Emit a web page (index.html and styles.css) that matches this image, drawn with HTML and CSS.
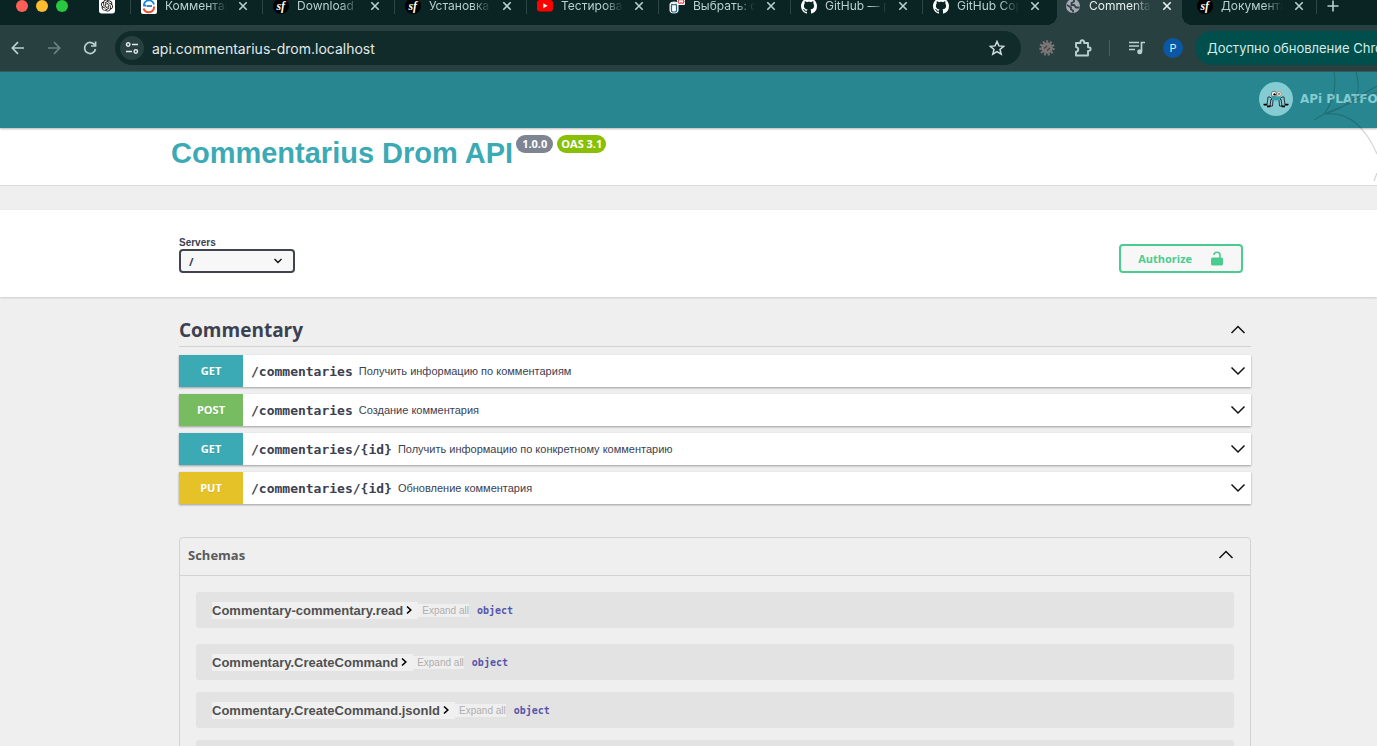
FILE: index.html
```html
<!DOCTYPE html>
<html lang="ru">
<head>
<meta charset="utf-8">
<title>Commentarius Drom API</title>
<link rel="stylesheet" href="styles.css">
</head>
<body>
<svg class="defs" aria-hidden="true">
  <symbol id="close" viewBox="0 0 10 10"><path d="M1.3 1.3l7.4 7.4M8.7 1.3L1.3 8.7" stroke="currentColor" stroke-width="1.6" fill="none"/></symbol>
  <symbol id="symfony" viewBox="0 0 16 16"><circle cx="8" cy="8" r="8" fill="#000"/><text x="3.4" y="11.6" font-family="Liberation Serif, serif" font-style="italic" font-weight="bold" font-size="12" fill="#fff">sf</text></symbol>
  <symbol id="github" viewBox="0 0 16 16"><path fill="#fff" d="M8 0C3.58 0 0 3.58 0 8c0 3.54 2.29 6.53 5.47 7.59.4.07.55-.17.55-.38 0-.19-.01-.82-.01-1.49-2.01.37-2.53-.49-2.69-.94-.09-.23-.48-.94-.82-1.13-.28-.15-.68-.52-.01-.53.63-.01 1.08.58 1.23.82.72 1.21 1.87.87 2.33.66.07-.52.28-.87.51-1.07-1.78-.2-3.64-.89-3.64-3.95 0-.87.31-1.59.82-2.15-.08-.2-.36-1.02.08-2.12 0 0 .67-.21 2.2.82.64-.18 1.32-.27 2-.27s1.36.09 2 .27c1.53-1.04 2.2-.82 2.2-.82.44 1.1.16 1.92.08 2.12.51.56.82 1.27.82 2.15 0 3.07-1.87 3.75-3.65 3.95.29.25.54.73.54 1.48 0 1.07-.01 1.93-.01 2.2 0 .21.15.46.55.38A8.01 8.01 0 0016 8c0-4.42-3.58-8-8-8z"/></symbol>
  <symbol id="down" viewBox="0 0 16 10"><path d="M1.500 1.500L8 8l6.500-6.500" stroke="#111" stroke-width="1.500" fill="none"/></symbol>
  <symbol id="up" viewBox="0 0 16 10"><path d="M1.500 8L8 1.500 14.500 8" stroke="#111" stroke-width="1.500" fill="none"/></symbol>
  <symbol id="right" viewBox="0 0 8 10"><path d="M2 1.500L5.800 5 2 8.500" stroke="#000" stroke-width="1.600" fill="none"/></symbol>
</svg>

<div class="browser">
  <nav class="tabs">
    <div class="lights"><i class="red"></i><i class="yellow"></i><i class="green"></i></div>
    <svg class="pinned" viewBox="0 0 24 24"><rect width="24" height="24" rx="4" fill="#fff"/><path transform="translate(3 3) scale(.75)" d="M22.2819 9.8211a5.9847 5.9847 0 0 0-.5157-4.9108 6.0462 6.0462 0 0 0-6.5098-2.9A6.0651 6.0651 0 0 0 4.9807 4.1818a5.9847 5.9847 0 0 0-3.9977 2.9 6.0462 6.0462 0 0 0 .7427 7.0966 5.98 5.98 0 0 0 .511 4.9107 6.051 6.051 0 0 0 6.5146 2.9001A5.9847 5.9847 0 0 0 13.2599 24a6.0557 6.0557 0 0 0 5.7718-4.2058 5.9894 5.9894 0 0 0 3.9977-2.9001 6.0557 6.0557 0 0 0-.7475-7.073zm-9.022 12.6081a4.4755 4.4755 0 0 1-2.8764-1.0408l.1419-.0804 4.7783-2.7582a.7948.7948 0 0 0 .3927-.6813v-6.7369l2.02 1.1686a.071.071 0 0 1 .038.052v5.5826a4.504 4.504 0 0 1-4.4945 4.4944zm-9.6607-4.1254a4.4708 4.4708 0 0 1-.5346-3.0137l.142.0852 4.783 2.7582a.7712.7712 0 0 0 .7806 0l5.8428-3.3685v2.3324a.0804.0804 0 0 1-.0332.0615L9.74 19.9502a4.4992 4.4992 0 0 1-6.1408-1.6464zM2.3408 7.8956a4.485 4.485 0 0 1 2.3655-1.9728V11.6a.7664.7664 0 0 0 .3879.6765l5.8144 3.3543-2.0201 1.1685a.0757.0757 0 0 1-.071 0l-4.8303-2.7865A4.504 4.504 0 0 1 2.3408 7.872zm16.5963 3.8558L13.1038 8.364 15.1192 7.2a.0757.0757 0 0 1 .071 0l4.8303 2.7913a4.4944 4.4944 0 0 1-.6765 8.1042v-5.6772a.79.79 0 0 0-.407-.667zm2.0107-3.0231l-.142-.0852-4.7735-2.7818a.7759.7759 0 0 0-.7854 0L9.409 9.2297V6.8974a.0662.0662 0 0 1 .0284-.0615l4.8303-2.7866a4.4992 4.4992 0 0 1 6.6802 4.66zM8.3065 12.863l-2.02-1.1638a.0804.0804 0 0 1-.038-.0567V6.0742a4.4992 4.4992 0 0 1 7.3757-3.4537l-.142.0805L8.704 5.459a.7948.7948 0 0 0-.3927.6813zm1.0976-2.3654l2.602-1.4998 2.6069 1.4998v2.9994l-2.5974 1.4997-2.6067-1.4997Z"/></svg>
    <div class="tab"><svg class="fav" viewBox="0 0 16 16"><rect width="16" height="16" rx="2" fill="#fff"/><path d="M13 6.500A5.200 5.200 0 0 0 3 6v1.500h2" fill="none" stroke="#1687e0" stroke-width="1.800"/><path d="M2.600 10.500A5.400 5.400 0 0 0 13 10V8.500" fill="none" stroke="#f04a32" stroke-width="2"/><path d="M5.500 8h5.500" stroke="#1665b8" stroke-width="1.600"/></svg><span>Комментарии</span><button aria-label="Закрыть"><svg><use href="#close"/></svg></button></div>
    <div class="tab"><svg class="fav"><use href="#symfony"/></svg><span>Download Symfony</span><button aria-label="Закрыть"><svg><use href="#close"/></svg></button></div>
    <div class="tab"><svg class="fav"><use href="#symfony"/></svg><span>Установка и</span><button aria-label="Закрыть"><svg><use href="#close"/></svg></button></div>
    <div class="tab"><svg class="fav" viewBox="0 0 16 16"><rect y="2" width="16" height="11.500" rx="3" fill="#f00"/><path d="M6.300 5.200v5l4.300-2.500z" fill="#fff"/></svg><span>Тестирование</span><button aria-label="Закрыть"><svg><use href="#close"/></svg></button></div>
    <div class="tab"><svg class="fav" viewBox="0 0 16 16"><path d="M1 6q0-2 4-2t4 2v7q0 2-4 2t-4-2z" fill="#fff" stroke="#e7f2f7"/><path d="M2.500 6.500v6q0 1.500 2.500 1.500t2.500-1.500v-6M2.500 6q2.500 1.500 5 0" fill="none" stroke="#286283" stroke-width="1.200"/><rect x="8" width="8" height="7" rx="1" fill="#fff"/><path d="M10.500 1L9 3.500 10.500 6M13.500 1L15 3.500 13.500 6M12 1v1.500M12 4v2" fill="none" stroke="#e33545" stroke-width="1.200"/></svg><span>Выбрать: comm</span><button aria-label="Закрыть"><svg><use href="#close"/></svg></button></div>
    <div class="tab"><svg class="fav"><use href="#github"/></svg><span>GitHub — program</span><button aria-label="Закрыть"><svg><use href="#close"/></svg></button></div>
    <div class="tab"><svg class="fav"><use href="#github"/></svg><span>GitHub Copilot</span><button aria-label="Закрыть"><svg><use href="#close"/></svg></button></div>
    <div class="tab active"><svg class="fav" viewBox="0 0 16 16"><circle cx="8" cy="8" r="7" fill="#a7a9b5"/><path d="M2 7l4 2.500v2l2 1v2M9 1.500v2L6.500 5v2H9l2 2.500h3.500" fill="none" stroke="#304544" stroke-width="1.800"/></svg><span>Commentarius</span><button aria-label="Закрыть"><svg><use href="#close"/></svg></button></div>
    <div class="tab last"><svg class="fav"><use href="#symfony"/></svg><span>Документация</span><button aria-label="Закрыть"><svg><use href="#close"/></svg></button></div>
    <button class="newtab" aria-label="Новая вкладка"><svg viewBox="0 0 12 12"><path d="M6 .5v11M.5 6h11" stroke="currentColor" stroke-width="1.600"/></svg></button>
  </nav>
  <div class="toolbar">
    <button class="tool" aria-label="Назад"><svg viewBox="0 0 16 16"><path d="M14 8H2.500M8 2.200L2.300 8 8 13.800" stroke="currentColor" stroke-width="1.700" fill="none"/></svg></button>
    <button class="tool dim" aria-label="Вперёд"><svg viewBox="0 0 16 16"><path d="M2 8h11.500M8 2.200L13.700 8 8 13.800" stroke="currentColor" stroke-width="1.700" fill="none"/></svg></button>
    <button class="tool" aria-label="Обновить"><svg viewBox="0 0 16 16"><path d="M13 5.500A5.500 5.500 0 1 0 13.500 9M13.600 1.500V6H9" stroke="currentColor" stroke-width="1.700" fill="none"/></svg></button>
    <div class="address">
      <button class="site" aria-label="Сведения о сайте"><svg viewBox="0 0 14 14"><g fill="none" stroke="currentColor" stroke-width="1.500"><circle cx="3.200" cy="3.500" r="1.700"/><path d="M7 3.500h6M1 10.500h6"/><circle cx="10.800" cy="10.500" r="1.700"/></g></svg></button>
      <input type="text" aria-label="Адрес" value="api.commentarius-drom.localhost">
      <button class="star" aria-label="Закладка"><svg viewBox="0 0 16 16"><path d="M8 1.500l1.900 4.400 4.800.4L11 9.500l1.200 4.700L8 11.700l-4.200 2.500L5 9.500 1.300 6.300l4.800-.4z" fill="none" stroke="currentColor" stroke-width="1.500"/></svg></button>
    </div>
    <button class="tool" aria-label="Отладка"><svg viewBox="0 0 16 16"><circle cx="8" cy="8" r="5.800" fill="#7d7475"/><circle cx="8" cy="8" r="6.600" fill="none" stroke="#7d7475" stroke-width="2.200" stroke-dasharray="2 1.770"/><path d="M5 8.500l3-2.500M8 10.500l3-2.500" stroke="#354746" stroke-width="1.200"/></svg></button>
    <button class="tool" aria-label="Расширения"><svg class="puzzle" viewBox="0 0 18 18"><path d="M2 4h4.500V3a1.800 1.800 0 0 1 3.600 0v1H14v4.300h.800a1.800 1.800 0 0 1 0 3.600H14V16.500H2v-3.800c3-.3 3-4.300 0-4.600z" fill="none" stroke="currentColor" stroke-width="1.900" stroke-linejoin="round"/></svg></button>
    <i class="divider"></i>
    <button class="tool" aria-label="Медиа"><svg viewBox="0 0 16 16"><path d="M0 2.500h10M0 6h10M0 9.500h6M12.500 11.500v-9H16" stroke="currentColor" stroke-width="1.700" fill="none"/><circle cx="10.700" cy="11.700" r="2.500" fill="currentColor"/></svg></button>
    <button class="profile" aria-label="Профиль">P</button>
    <button class="update">Доступно обновление Chrome</button>
  </div>
</div>

<header class="brand">
  <svg class="web" viewBox="0 0 75 115" fill="none" stroke="#000" stroke-opacity=".17" stroke-width="1.200"><path d="M32 0q4 24-10 42M54 0q6 22-4 28Q38 38 22 42L12 48M22 42Q56 38 75 82M75 101l-3 8M50 28l25-14M22 42l53-22"/></svg>
  <a href="#" class="logo">
    <svg viewBox="0 0 34 34"><circle cx="17" cy="17" r="17" fill="#84cbd2"/><path d="M13 17l-2-2-2 0-1 8H5M13 18l-1-1-1 7H8M14 18l-.500 6H11M21 17l2-2h2l1 8h3M21 18l1-1 1 7h3M20 18l.5 6H23" fill="none" stroke="#20262b" stroke-width=".9"/><path d="M12 14.500h10q0 4-5 4t-5-4" fill="#30a2ae"/><circle cx="15" cy="12" r="2.700" fill="#fff" stroke="#333" stroke-width=".6"/><circle cx="20" cy="12" r="2.200" fill="#fff" stroke="#a46a45" stroke-width=".6"/><circle cx="15.500" cy="12.400" r="1.200"/><circle cx="20" cy="12" r=".8"/><path d="M4.500 22.500h3.500M8 24.500h3.500M22.500 24.500H26M26 22.500h3.500" stroke="#000" stroke-width="1.400"/></svg>
    <span>APi PLATFORM</span>
  </a>
</header>

<main>
  <section class="info">
    <h1>Commentarius Drom API</h1>
    <span class="badge">1.0.0</span>
    <span class="badge oas">OAS 3.1</span>
  </section>
  <section class="servers">
    <div class="wrap">
      <div class="field">
        <label for="server">Servers</label>
        <select id="server"><option>/</option></select>
      </div>
      <button class="authorize">Authorize <svg viewBox="0 0 14 16"><rect x="1" y="6.500" width="12" height="8" rx="1.500" fill="currentColor"/><path d="M4 4Q4 1.200 7 1.200t3 2.800V7.500" fill="none" stroke="currentColor" stroke-width="1.600"/></svg></button>
    </div>
  </section>

  <section class="ops">
    <h2>Commentary <button aria-label="Свернуть"><svg><use href="#up"/></svg></button></h2>
    <article class="op"><b class="method get">GET</b><a href="#">/commentaries</a><p>Получить информацию по комментариям</p><button aria-label="Развернуть"><svg><use href="#down"/></svg></button></article>
    <article class="op"><b class="method post">POST</b><a href="#">/commentaries</a><p>Создание комментария</p><button aria-label="Развернуть"><svg><use href="#down"/></svg></button></article>
    <article class="op"><b class="method get">GET</b><a href="#">/commentaries/{id}</a><p>Получить информацию по конкретному комментарию</p><button aria-label="Развернуть"><svg><use href="#down"/></svg></button></article>
    <article class="op"><b class="method put">PUT</b><a href="#">/commentaries/{id}</a><p>Обновление комментария</p><button aria-label="Развернуть"><svg><use href="#down"/></svg></button></article>
  </section>

  <section class="schemas">
    <h3>Schemas <button aria-label="Свернуть"><svg><use href="#up"/></svg></button></h3>
    <div class="list">
      <article class="schema first"><button class="name">Commentary-commentary.read<svg><use href="#right"/></svg></button><button class="expand">Expand all</button><code>object</code></article>
      <article class="schema"><button class="name">Commentary.CreateCommand<svg><use href="#right"/></svg></button><button class="expand">Expand all</button><code>object</code></article>
      <article class="schema"><button class="name">Commentary.CreateCommand.jsonld<svg><use href="#right"/></svg></button><button class="expand">Expand all</button><code>object</code></article>
      <article class="schema"></article>
    </div>
  </section>
</main>
</body>
</html>
```
FILE: styles.css
```css
* { box-sizing: border-box; }
html { height: 100%; overflow: hidden; }
body {
  margin: 0;
  height: 100%;
  overflow: hidden;
  background: #efefef;
  color: #3b4151;
  font-family: "Liberation Sans", sans-serif;
}
button {
  border: 0;
  padding: 0;
  margin: 0;
  background: none;
  color: inherit;
  font: inherit;
}
button svg { display: block; }
.defs { position: absolute; width: 0; height: 0; }

/* Browser window */
.browser { color: #b9d0cd; font-family: Inter, sans-serif; }
.tabs {
  display: flex;
  align-items: flex-end;
  height: 25px;
  background: #092423;
  overflow: hidden;
}
.lights, .tab, .newtab { display: flex; align-items: center; height: 39px; flex: none; }
.lights { gap: 8px; padding-left: 16px; }
.lights i { width: 12px; height: 12px; border-radius: 50%; }
.red { background: #ff5f57; }
.yellow { background: #febc2e; }
.green { background: #28c840; }
.pinned { width: 16px; height: 39px; flex: none; margin: 0 18px 0 31px; }
.tab {
  position: relative;
  width: 125px;
  margin-right: 7px;
  padding: 0 10px 0 8px;
  font-size: 12px;
}
.tab::before, .last::after {
  content: "";
  position: absolute;
  left: -3px;
  width: 1px;
  height: 16px;
  background: #2f4645;
}
.last::after { left: 127px; }
.fav { width: 16px; height: 16px; flex: none; }
.tab span {
  flex: 1;
  min-width: 0;
  margin: 0 11px 0 8px;
  overflow: hidden;
  white-space: nowrap;
  mask-image: linear-gradient(90deg, #000 70%, transparent);
}
.tab button svg { width: 10px; height: 10px; }
.active { background: #284040; color: #e6f1ef; }
.active::before, .active::after {
  content: "";
  position: absolute;
  bottom: 0;
  width: 10px;
  height: 10px;
}
.active::before { left: -10px; background: radial-gradient(circle at 0 0, #092423 10px, #284040 10px); }
.active::after { right: -10px; background: radial-gradient(circle at 100% 0, #092423 10px, #284040 10px); }
.last::before { display: none; }
.newtab { margin-left: 6px; }
.newtab svg { width: 12px; height: 12px; }

.toolbar {
  display: flex;
  align-items: center;
  height: 47px;
  background: #284040;
  border-bottom: 1px solid #3a5a5c;
}
.tool { display: flex; justify-content: center; width: 36px; flex: none; }
.tool svg { width: 16px; height: 16px; }
.tool .puzzle { width: 18px; height: 18px; }
.dim { color: #6b817f; }
.address {
  display: flex;
  align-items: center;
  flex: 1;
  min-width: 0;
  height: 34px;
  margin: 0 8px 0 7px;
  padding: 0 16px 0 5px;
  border-radius: 17px;
  background: #112b2b;
}
.site {
  display: grid;
  place-items: center;
  width: 24px;
  height: 24px;
  border-radius: 50%;
  background: #284040;
  color: #dfe9e8;
}
.site svg { width: 14px; height: 14px; }
.address input {
  flex: 1;
  min-width: 0;
  margin: 0 8px;
  padding: 0;
  border: 0;
  outline: 0;
  background: none;
  color: #e2eae9;
  font: 14px Inter, sans-serif;
}
.star { color: #cfdedc; }
.star svg { width: 16px; height: 16px; }
.divider { width: 1px; height: 16px; margin: 0 9px 0 8px; background: #48605f; }
.profile {
  flex: none;
  width: 20px;
  height: 20px;
  margin: 0 12px 0 8px;
  border-radius: 50%;
  background: #0b57a4;
  color: #dceaf8;
  font-size: 11px;
}
.update {
  flex: none;
  width: 182px;
  height: 34px;
  padding-left: 12px;
  border-radius: 17px 0 0 17px;
  background: #004f4d;
  color: #d3ecea;
  font-size: 13px;
  text-align: left;
  white-space: nowrap;
  overflow: hidden;
}

/* Brand bar */
.brand {
  position: relative;
  display: flex;
  justify-content: flex-end;
  align-items: center;
  height: 56px;
  padding-bottom: 2px;
  background: #288690;
  box-shadow: 0 1px 2px rgba(0, 0, 0, .3);
}
.web { position: absolute; top: 0; right: 0; width: 75px; height: 115px; }
.logo {
  display: flex;
  align-items: center;
  gap: 7px;
  width: 118px;
  overflow: hidden;
  color: #84cbd2;
  font: bold 12px "DejaVu Sans", sans-serif;
  white-space: nowrap;
  text-decoration: none;
}
.logo svg { width: 34px; height: 34px; flex: none; }

/* Title */
.info {
  display: flex;
  align-items: flex-start;
  height: 58px;
  padding: 7px 0 0 171px;
  background: #fff;
  border-bottom: 1px solid #dcdcdc;
}
h1 {
  margin: 0 3px 0 0;
  color: #3caab5;
  font-size: 29px;
  line-height: 36px;
}
.badge {
  margin-right: 4px;
  padding: 0 6px;
  border-radius: 10px;
  background: #7d8492;
  color: #fff;
  font: bold 11px/18px "Open Sans", sans-serif;
}
.oas { padding: 0 4px; background: #89bf04; }

.servers {
  margin-top: 24px;
  padding: 26px 0 24px;
  background: #fff;
  box-shadow: 0 1px 2px rgba(0, 0, 0, .15);
}
.wrap, .ops, .schemas { margin: 0 126px 0 179px; }
.wrap { display: flex; justify-content: space-between; align-items: flex-end; padding-right: 8px; }
.field { display: flex; flex-direction: column; }
.field label { font-size: 10px; font-weight: bold; line-height: 13px; }
select {
  appearance: none;
  width: 116px;
  height: 24px;
  padding: 0 8px;
  border: 2px solid #41444e;
  border-radius: 4px;
  background: #f7f7f7 url("data:image/svg+xml,%3Csvg xmlns='http://www.w3.org/2000/svg' viewBox='0 0 10 8'%3E%3Cpath d='M1.500 2L5 5.500 8.500 2' fill='none' stroke='%23111' stroke-width='1.400'/%3E%3C/svg%3E") right 10px center / 10px 8px no-repeat;
  color: #3b4151;
  font: bold 11px "Open Sans", sans-serif;
}
.authorize {
  display: flex;
  align-items: center;
  gap: 18px;
  height: 29px;
  padding: 0 17px;
  border: 2px solid #49cc90;
  border-radius: 4px;
  background: #f7f7f7;
  color: #49cc90;
  font: bold 11px "Open Sans", sans-serif;
}
.authorize svg { width: 14px; height: 16px; }

/* Operations */
.ops { padding-top: 17px; }
h2 {
  display: flex;
  justify-content: space-between;
  align-items: center;
  height: 33px;
  margin: 0 0 8px;
  padding-right: 5px;
  border-bottom: 1px solid #d3d3d5;
  font: bold 19px "Open Sans", sans-serif;
}
h2 svg, h3 svg, .op svg { width: 16px; height: 10px; }
.op {
  display: flex;
  align-items: center;
  height: 32px;
  margin-bottom: 7px;
  padding-right: 5px;
  background: #fff;
  box-shadow: 0 1px 2px rgba(0, 0, 0, .35);
}
.method {
  width: 64px;
  color: #fff;
  font: bold 11px/32px "Open Sans", sans-serif;
  text-align: center;
  text-shadow: 0 1px 0 rgba(0, 0, 0, .1);
}
.get { background: #3caab5; }
.post { background: #78bc61; }
.put { background: #e6c229; }
.op a {
  padding: 0 6px 0 8px;
  color: #3b4151;
  font: bold 13px "DejaVu Sans Mono", monospace;
  text-decoration: none;
}
.op p { flex: 1; margin: 0; font-size: 11px; }

/* Schemas */
.schemas {
  margin-top: 33px;
  border: 1px solid #d3d3d5;
  border-radius: 4px;
}
h3 {
  display: flex;
  justify-content: space-between;
  align-items: center;
  height: 38px;
  margin: 0;
  padding: 0 16px 4px 8px;
  border-bottom: 1px solid #d3d3d5;
  color: #5a5a5c;
  font: bold 13px "Open Sans", sans-serif;
}
.list { padding: 16px; }
.schema {
  display: flex;
  align-items: center;
  height: 36px;
  margin-bottom: 12px;
  padding: 0 16px;
  border-radius: 3px;
  background: #e3e3e3;
}
.first { margin-bottom: 16px; }
.name {
  display: flex;
  align-items: center;
  gap: 2px;
  height: 17px;
  padding-right: 5px;
  background: #f0f0f0;
  color: #505050;
  font-size: 13px;
  font-weight: bold;
}
.name svg { width: 8px; height: 10px; }
.expand {
  height: 13px;
  padding-left: 4px;
  background: #efefef;
  color: #afaeae;
  font-size: 10px;
}
.schema code {
  margin-left: 8px;
  color: #5555aa;
  font: bold 10px "DejaVu Sans Mono", monospace;
}
```
